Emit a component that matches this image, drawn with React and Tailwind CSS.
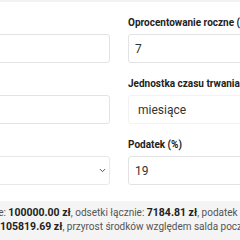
import React from "react";
import { ChevronDown } from "lucide-react";

const Field = ({ label, children }) => (
  <div className="flex flex-col">
    <label className="text-[10px] leading-4 font-bold text-[#222] mb-[3px] whitespace-nowrap">{label}</label>
    {children}
  </div>
);

const Input = ({ value }) => (
  <input
    readOnly
    value={value}
    className="h-[29px] w-full border border-[#e3e3e3] rounded-[3px] px-[6px] text-[12px] text-[#333] bg-white outline-none"
  />
);

const Select = ({ value, faint }) => (
  <div className={`h-[29px] w-full border ${faint ? "border-[#f2f2f2]" : "border-[#e8e8e8]"} rounded-[3px] pl-[9px] pr-[2px] flex items-center justify-between text-[12px] text-[#333] bg-white`}>
    <span>{value}</span>
    <ChevronDown size={9} strokeWidth={2.5} className="text-[#444]" />
  </div>
);

const B = ({ children }) => <b className="text-[10.5px] font-bold text-[#222]">{children}</b>;

export default function App() {
  return (
    <div className="w-[240px] h-[240px] overflow-hidden bg-white border-t-2 border-[#f2f2f2]" style={{ fontFamily: "Roboto, 'Liberation Sans', sans-serif" }}>
      <div className="-ml-[130px] w-[560px]">
        <div className="grid grid-cols-[240px_240px] gap-x-[18px] gap-y-[13px] pt-[13px]">
          <Field label="Kwota">
            <Input value="100000" />
          </Field>
          <Field label="Oprocentowanie roczne (%)">
            <Input value="7" />
          </Field>
          <Field label="Okres">
            <Input value="12" />
          </Field>
          <Field label="Jednostka czasu trwania">
            <Select value="miesiące" faint />
          </Field>
          <Field label="Kapitalizacja">
            <Select value="co miesiąc" />
          </Field>
          <Field label="Podatek (%)">
            <Input value="19" />
          </Field>
        </div>
        <div className="mt-[16px] bg-[#f4f4f4] pt-[5px] pb-4 pl-[52px] text-[10px] leading-[14px] text-[#555] whitespace-nowrap">
          <p>
            Saldo początkowe: <B>100000.00 zł</B>, odsetki łącznie: <B>7184.81 zł</B>, podatek łącznie: <B>1365.11 zł</B>
          </p>
          <p>
            Kwota na koniec: <B>105819.69 zł</B>, przyrost środków względem salda początkowego: <B>5.82%</B>
          </p>
        </div>
      </div>
    </div>
  );
}
